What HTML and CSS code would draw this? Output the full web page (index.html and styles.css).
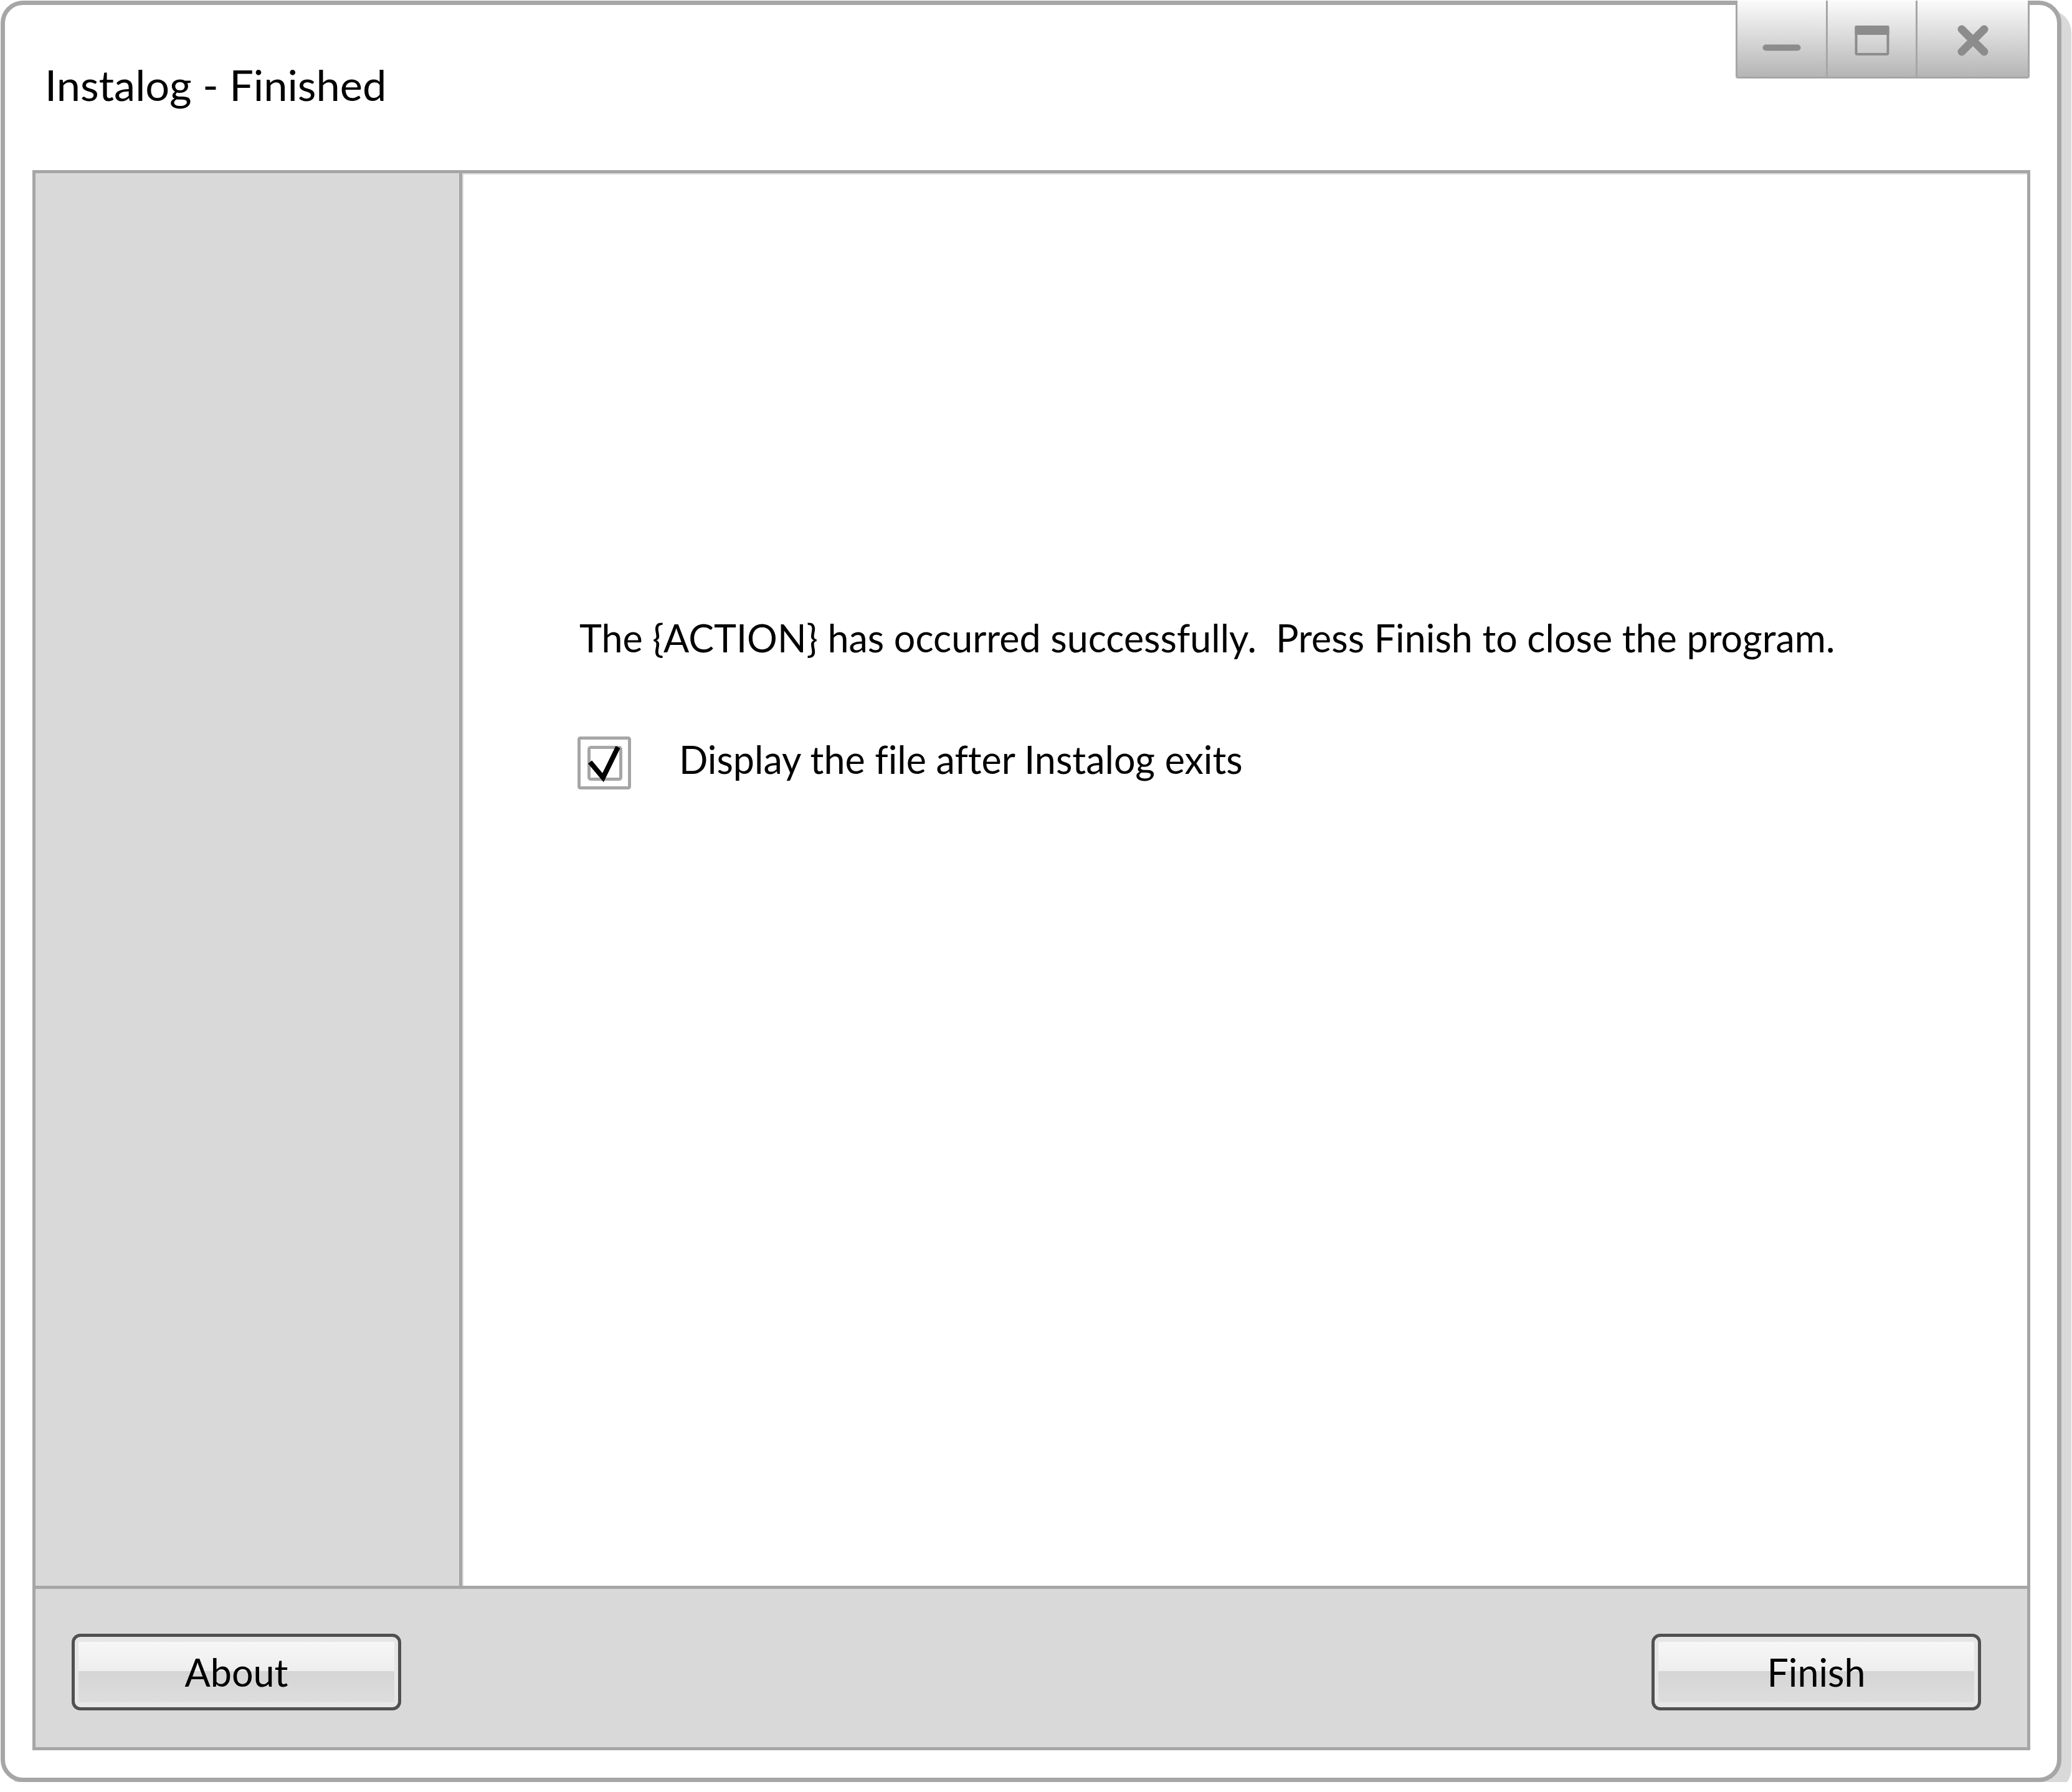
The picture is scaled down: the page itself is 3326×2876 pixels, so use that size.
FILE: index.html
```html
<!DOCTYPE html>
<html lang="en">
<head>
<meta charset="utf-8">
<title>Instalog - Finished</title>
<link rel="stylesheet" href="styles.css">
</head>
<body>
<div class="window">
  <div class="titlebar">
    <div class="title">Instalog - Finished</div>
  </div>
  <div class="winctrls">
    <div class="wbtn wbtn-min">
      <svg width="62" height="62" viewBox="0 0 62 62"><rect x="0.5" y="40.5" width="61" height="10" rx="5" fill="#8c8c8c"/></svg>
    </div>
    <div class="wbtn wbtn-max">
      <svg width="62" height="62" viewBox="0 0 62 62"><rect x="5.5" y="12" width="51" height="44" rx="2" fill="none" stroke="#8c8c8c" stroke-width="4"/><rect x="3.5" y="10" width="55" height="15" rx="2" fill="#8c8c8c"/></svg>
    </div>
    <div class="wbtn wbtn-close">
      <svg width="62" height="62" viewBox="0 0 62 62"><path d="M13 16 L49 52 M49 16 L13 52" stroke="#8c8c8c" stroke-width="13" stroke-linecap="round" fill="none"/></svg>
    </div>
  </div>
  <div class="panel">
    <div class="main">
      <div class="sidebar"></div>
      <div class="content">
        <p class="message">The {ACTION} has occurred successfully.&nbsp; Press Finish to close the program.</p>
        <div class="check">
          <span class="box"><svg width="86" height="85" viewBox="0 0 86 85"><rect x="2.5" y="2.5" width="81" height="80" rx="2" fill="none" stroke="#a6a6a6" stroke-width="5"/><rect x="18.5" y="17.5" width="51" height="51" rx="3" fill="none" stroke="#a6a6a6" stroke-width="5"/><path d="M20 41 L41 66 L65 17" fill="none" stroke="#000" stroke-width="8"/></svg></span>
          <span class="label">Display the file after Instalog exits</span>
        </div>
      </div>
    </div>
    <div class="bottombar">
      <button class="btn">About</button>
      <button class="btn">Finish</button>
    </div>
  </div>
</div>
</body>
</html>
```
FILE: styles.css
```css
* { box-sizing: border-box; }
html, body { margin: 0; padding: 0; background: #fff; }
body {
  font-family: "Lato", "Open Sans", sans-serif;
  color: #000;
  font-variant-ligatures: none;
}

.window {
  position: relative;
  margin: 1px 0 0 1px;
  width: 3308px;
  height: 2859px;
  border: 7px solid #a6a6a6;
  border-radius: 36px;
  background: #fff;
  box-shadow: 16px 15px 0 #d9d9d9;
  padding: 0 43px 44px 44px;
  display: flex;
  flex-direction: column;
}

.titlebar {
  height: 265px;
  padding: 94px 0 0 20px;
  flex: none;
}
.title {
  font-size: 68.5px;
  line-height: 68px;
}

.winctrls {
  position: absolute;
  top: -7px;
  right: 44px;
  width: 472px;
  height: 125px;
  display: flex;
  border: 3px solid #a6a6a6;
  border-top: none;
  border-radius: 0 0 4px 4px;
  overflow: hidden;
}
.wbtn {
  display: flex;
  align-items: center;
  justify-content: center;
  background: linear-gradient(to bottom, #fbfbfb, #b5b5b5);
}
.wbtn + .wbtn { border-left: 3px solid #a6a6a6; }
.wbtn-min { width: 142px; }
.wbtn-max { width: 144px; }
.wbtn-close { flex: 1; }

.panel {
  flex: 1;
  border: 5px solid #a6a6a6;
  display: flex;
  flex-direction: column;
}
.main {
  height: 2267px;
  display: flex;
  flex: none;
}
.sidebar {
  width: 685px;
  background: #d9d9d9;
  border-right: 5px solid #a6a6a6;
  flex: none;
}
.content {
  flex: 1;
  background: #fff;
  box-shadow: inset 2px 2px 0 #dcdcdc;
  padding: 715px 0 0 185px;
}
.message {
  margin: 0 0 128px 3px;
  font-size: 61px;
  line-height: 61px;
  white-space: pre;
}
.check {
  display: flex;
  align-items: flex-start;
}
.box { display: block; width: 86px; height: 85px; flex: none; }
.box svg { display: block; }
.label {
  margin: 6px 0 0 77px;
  font-size: 61px;
  line-height: 61px;
}

.bottombar {
  flex: 1;
  background: #d9d9d9;
  border-top: 5px solid #a6a6a6;
  display: flex;
  justify-content: space-between;
  align-items: flex-start;
  padding: 72px 74px 0 58px;
}
.btn {
  width: 529px;
  height: 123px;
  border: 5px solid #505050;
  border-radius: 14px;
  padding: 8px 6px;
  font-family: "Lato", "Open Sans", sans-serif;
  font-variant-ligatures: none;
  font-size: 61px;
  color: #000;
  background:
    linear-gradient(to bottom, #f6f6f6 0%, #eeeeee 48%, #d5d5d5 48%, #dddddd 100%) content-box,
    #e6e6e6;
}
```
